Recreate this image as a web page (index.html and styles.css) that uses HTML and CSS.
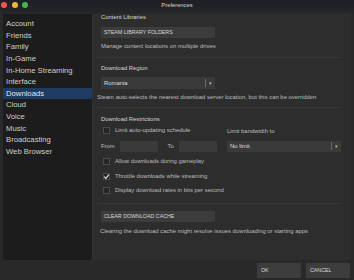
FILE: index.html
```html
<!DOCTYPE html>
<html>
<head>
    <title>Preferences</title>
    <link rel="stylesheet" href="styles.css">
</head>
<body>
    <div class="titlebar">
        <div class="lights">
            <span class="light red"></span>
            <span class="light yellow"></span>
            <span class="light green"></span>
        </div>
        <div class="title">Preferences</div>
    </div>

    <div class="main">
        <div class="sidebar">
            <div class="item">Account</div>
            <div class="item">Friends</div>
            <div class="item">Family</div>
            <div class="item">In-Game</div>
            <div class="item">In-Home Streaming</div>
            <div class="item">Interface</div>
            <div class="item active">Downloads</div>
            <div class="item">Cloud</div>
            <div class="item">Voice</div>
            <div class="item">Music</div>
            <div class="item">Broadcasting</div>
            <div class="item">Web Browser</div>
        </div>

        <div class="content">
            <div class="label">Content Libraries</div>
            <div class="btn wide lib-btn">STEAM LIBRARY FOLDERS</div>
            <div class="note manage">Manage content locations on multiple drives</div>
            <div class="sep sep1"></div>

            <div class="label region">Download Region</div>
            <div class="select wide region-select">
                <span class="select-text">Romania</span>
                <span class="select-arrow">▾</span>
            </div>
            <div class="note shifted auto">Steam auto-selects the nearest download server location, but this can be overridden</div>
            <div class="sep sep2"></div>

            <div class="label restrict">Download Restrictions</div>
            <div class="restrict-grid">
                <div class="left-col">
                    <div class="check-row">
                        <span class="box"></span>
                        <span class="note">Limit auto-updating schedule</span>
                    </div>
                    <div class="time-row">
                        <span class="note">From</span>
                        <span class="field"></span>
                        <span class="note to">To</span>
                        <span class="field"></span>
                    </div>
                </div>
                <div class="right-col">
                    <div class="note bw-label">Limit bandwidth to</div>
                    <div class="select bw-select">
                        <span class="select-text">No limit</span>
                        <span class="select-arrow">▾</span>
                    </div>
                </div>
            </div>
            <div class="check-row allow">
                <span class="box"></span>
                <span class="note">Allow downloads during gameplay</span>
            </div>
            <div class="check-row throttle">
                <span class="box checked">
                    <svg width="7" height="7" viewBox="0 0 7 7"><path d="M1.2 3.6 L2.9 5.3 L5.9 1.5" fill="none" stroke="#e8e8e8" stroke-width="1.2"/></svg>
                </span>
                <span class="note">Throttle downloads while streaming</span>
            </div>
            <div class="check-row bits">
                <span class="box"></span>
                <span class="note">Display download rates in bits per second</span>
            </div>
            <div class="sep sep3"></div>

            <div class="btn wide cache-btn">CLEAR DOWNLOAD CACHE</div>
            <div class="note clearing">Clearing the download cache might resolve issues downloading or starting apps</div>
        </div>
    </div>

    <div class="footer">
        <div class="btn foot-btn">OK</div>
        <div class="btn foot-btn">CANCEL</div>
    </div>
</body>
</html>
```

FILE: styles.css
```css
body {
    margin: 0;
    width: 354px;
    height: 280px;
    overflow: hidden;
    background-color: #292929;
    font-family: "Liberation Sans", Arial, sans-serif;
    color: #cfcfcf;
}
.titlebar {
    height: 13px;
    position: relative;
    background: linear-gradient(#1d1f24, #25262a);
}
.lights {
    display: flex;
    gap: 4.5px;
    padding: 1.5px 0 0 1px;
}
.light {
    width: 6px;
    height: 6px;
    border-radius: 50%;
}
.light.red { background-color: #f5554f; }
.light.yellow { background-color: #f4b53a; }
.light.green { background-color: #3cbc46; }
.title {
    position: absolute;
    left: 0;
    right: 0;
    top: 2px;
    text-align: center;
    font-size: 5.8px;
    color: #d8d8d8;
}
.main {
    display: flex;
    height: 246px;
    margin-top: 1px;
}
.sidebar {
    width: 89px;
    margin-left: 3px;
    padding-top: 4px;
    background-color: #1c1c1c;
    border-right: 1px solid #333;
}
.item {
    height: 11.65px;
    line-height: 11.65px;
    padding-left: 3px;
    font-size: 7.7px;
    color: #cfcfcf;
}
.item.active {
    background-color: #1e3b62;
    color: #e6e6e6;
}
.content {
    flex: 1;
    margin-right: 4px;
    padding: 0 8px 0 8px;
    background-color: #2d2d2d;
}
.label {
    font-size: 5.9px;
    line-height: 7px;
    height: 7px;
    margin-top: 0;
    color: #d6d6d6;
}
.note {
    font-size: 5.9px;
    line-height: 7px;
    color: #bdbdbd;
}
.btn {
    box-sizing: border-box;
    height: 11px;
    line-height: 11px;
    padding-left: 3px;
    font-size: 5.3px;
    color: #dadada;
    background-color: #3c3c3c;
}
.wide {
    width: 114px;
}
.lib-btn { margin-top: 6px; }
.manage { margin-top: 4.5px; }
.sep {
    height: 1px;
    margin-left: -4px;
    background-color: #383838;
}
.sep1 { margin-top: 7px; }
.region { margin-top: 7.5px; }
.select {
    box-sizing: border-box;
    height: 12px;
    display: flex;
    align-items: center;
    background-color: #3a3a3a;
}
.select-text {
    flex: 1;
    padding-left: 3px;
    font-size: 5.9px;
    color: #dcdcdc;
}
.select-arrow {
    width: 9px;
    height: 8px;
    line-height: 8px;
    text-align: center;
    border-left: 1px solid #6a6a6a;
    font-size: 5px;
    color: #bbb;
}
.region-select { margin-top: 4.5px; }
.shifted { margin-left: -4px; }
.auto { margin-top: 5px; }
.sep2 { margin-top: 6.5px; }
.restrict { margin-top: 7.5px; }
.restrict-grid {
    display: grid;
    grid-template-columns: 116px 114px;
    column-gap: 10px;
    margin-top: 4px;
}
.check-row {
    display: flex;
    align-items: center;
    gap: 5px;
    height: 8px;
    padding-left: 2px;
}
.box {
    box-sizing: border-box;
    width: 7px;
    height: 7px;
    border: 1px solid #4a4a4a;
    background-color: #262626;
    display: flex;
}
.box.checked svg {
    margin: -1px;
}
.time-row {
    display: flex;
    align-items: center;
    height: 11.5px;
    margin-top: 6px;
}
.field {
    width: 38px;
    height: 11.5px;
    background-color: #3a3a3a;
}
.time-row .note:first-child { width: 19px; }
.to { width: 11.5px; margin-left: 9.5px; }
.bw-label { height: 8px; line-height: 8px; }
.bw-select { margin-top: 6px; height: 11.5px; }
.allow { margin-top: 5.5px; }
.throttle { margin-top: 6.5px; }
.bits { margin-top: 6px; }
.sep3 { margin-top: 9px; }
.cache-btn { margin-top: 6.5px; }
.clearing { margin-top: 6.5px; margin-left: -1px; }
.footer {
    display: flex;
    justify-content: flex-end;
    gap: 5px;
    padding: 3px 4px 0 0;
}
.foot-btn {
    width: 44px;
    height: 15px;
    line-height: 15px;
    padding-left: 4px;
    background-color: #3d3d3d;
}
```
